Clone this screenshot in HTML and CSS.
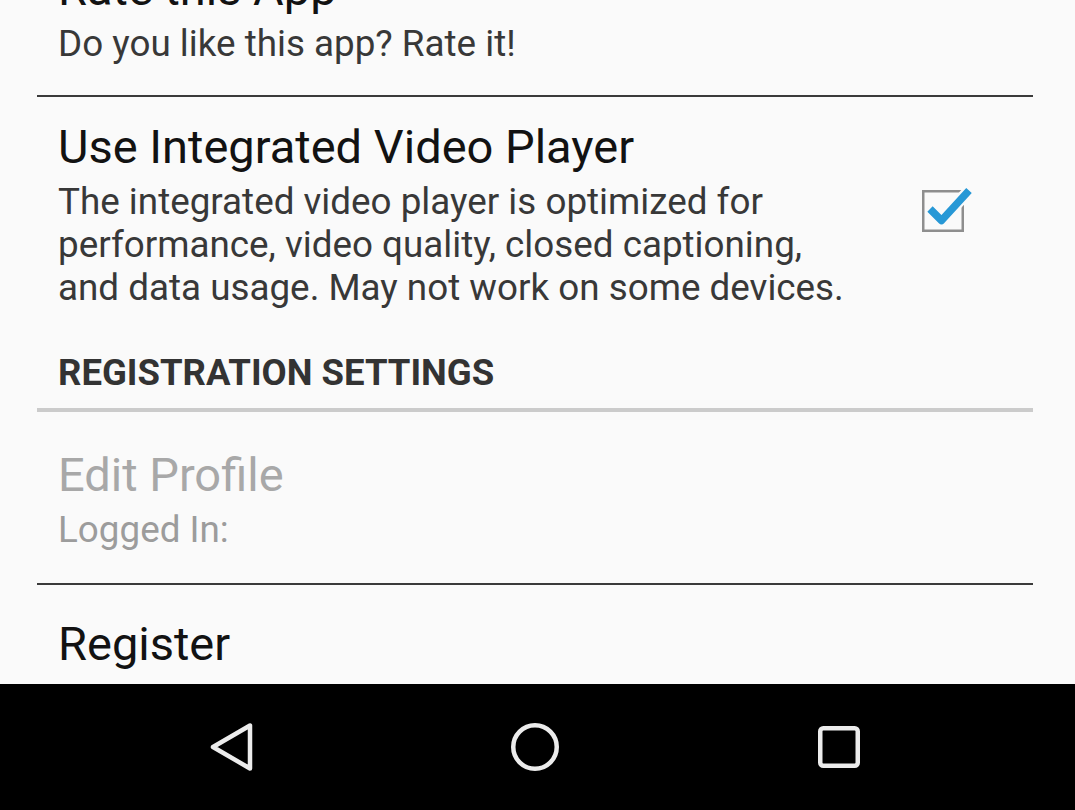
FILE: index.html
```html
<!DOCTYPE html>
<html lang="en">
<head>
<meta charset="utf-8">
<title>Settings</title>
<link rel="stylesheet" href="styles.css">
</head>
<body>
<div class="screen">
  <div class="viewport">
    <div class="list">
      <div class="pref">
        <div class="title">Rate this App</div>
        <div class="summary">Do you like this app? Rate it!</div>
      </div>
      <hr class="divider">
      <div class="pref pref-check">
        <div class="pref-text">
          <div class="title">Use Integrated Video Player</div>
          <div class="summary">The integrated video player is optimized for performance, video quality, closed captioning, and data usage. May not work on some devices.</div>
        </div>
        <div class="widget">
          <svg class="checkbox" width="54" height="48" viewBox="0 0 54 48">
            <rect x="3.25" y="4.25" width="39.5" height="39.5" fill="none" stroke="#8e8e8e" stroke-width="2.5"/>
            <path d="M10 22 L21.5 33.5 L49 3.5" fill="none" stroke="#fafafa" stroke-width="12" stroke-linejoin="round"/>
            <path d="M10 22 L21.5 33.5 L49 3.5" fill="none" stroke="#2798d6" stroke-width="7.5" stroke-linejoin="round"/>
          </svg>
        </div>
      </div>
      <div class="category">REGISTRATION SETTINGS</div>
      <div class="pref disabled after-category">
        <div class="title">Edit Profile</div>
        <div class="summary">Logged In:</div>
      </div>
      <hr class="divider">
      <div class="pref single">
        <div class="title">Register</div>
      </div>
    </div>
  </div>
  <nav class="navbar">
    <div class="nav-btn">
      <svg width="48" height="48" viewBox="0 0 48 48"><polygon points="6,24 43,2.5 43,45.5" fill="none" stroke="#ececec" stroke-width="4.5" stroke-linejoin="round"/></svg>
    </div>
    <div class="nav-btn">
      <svg width="48" height="48" viewBox="0 0 48 48"><circle cx="24" cy="24" r="21.75" fill="none" stroke="#ececec" stroke-width="4.5"/></svg>
    </div>
    <div class="nav-btn">
      <svg width="48" height="48" viewBox="0 0 48 48"><rect x="5.25" y="5.25" width="37.5" height="37.5" rx="3" fill="none" stroke="#ececec" stroke-width="4.5"/></svg>
    </div>
  </nav>
</div>
</body>
</html>
```

FILE: styles.css
```css
html, body {
  margin: 0;
  padding: 0;
}

body {
  background: #fafafa;
  font-family: Roboto, "Noto Sans", sans-serif;
}

.screen {
  width: 1075px;
  height: 810px;
  display: flex;
  flex-direction: column;
  overflow: hidden;
}

.viewport {
  flex: 1;
  min-height: 0;
  overflow: hidden;
}

.list {
  margin: -61px 42px 0 37px;
}

.pref {
  padding: 22px 0 30px 21px;
}

.pref.after-category {
  padding-top: 35px;
  padding-bottom: 32px;
}

.pref.single {
  padding-top: 31px;
}

.title {
  font-size: 47px;
  line-height: 55px;
  color: #121212;
  white-space: nowrap;
}

.summary {
  margin-top: 6px;
  font-size: 36.8px;
  line-height: 43px;
  color: #383838;
}

.disabled .title {
  color: #a8a8a8;
}

.disabled .summary {
  color: #9c9c9c;
}

.divider {
  border: none;
  height: 2px;
  margin: 0;
  background: #3a3a3a;
}

.pref-check {
  display: flex;
  align-items: center;
}

.pref-text {
  flex: 1;
  min-width: 0;
}

.widget {
  flex: none;
  width: 178px;
  box-sizing: border-box;
  padding-left: 65px;
  display: flex;
  align-items: center;
}

.checkbox {
  display: block;
  margin-bottom: 6px;
}

.category {
  padding: 12px 0 14px 21px;
  font-size: 36.5px;
  line-height: 43px;
  font-weight: 700;
  color: #333333;
  border-bottom: 4px solid #cbcbcb;
}

.navbar {
  flex: none;
  height: 126px;
  background: #000;
  display: flex;
  justify-content: center;
  align-items: center;
  padding-right: 5px;
}

.nav-btn {
  width: 304px;
  display: flex;
  justify-content: center;
  align-items: center;
}

.nav-btn svg {
  display: block;
}
```
